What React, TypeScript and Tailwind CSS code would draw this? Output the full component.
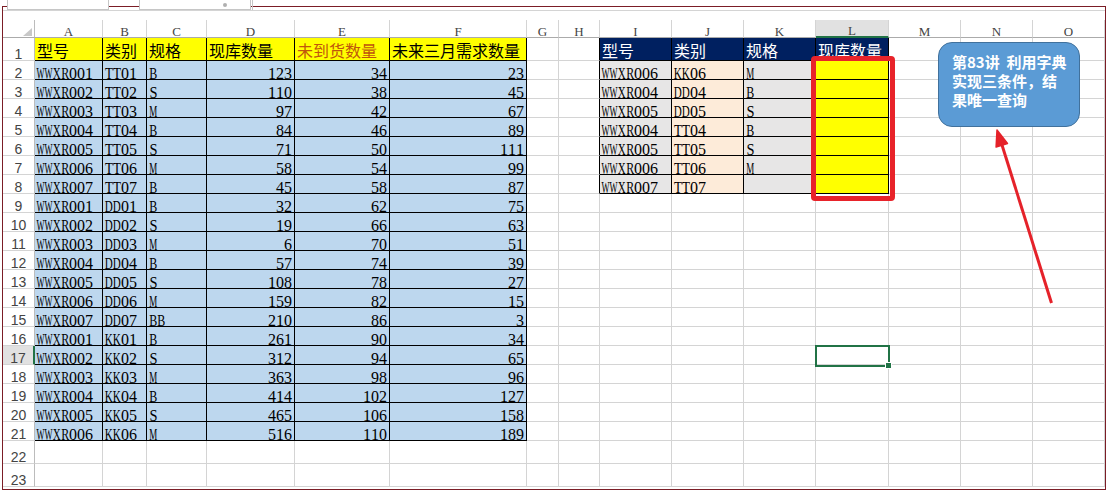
import React from "react";

const COLS = ["A", "B", "C", "D", "E", "F", "G", "H", "I", "J", "K", "L", "M", "N", "O"];

type Row = [string, string, string, number, number, number];
const DATA: Row[] = [
  ["WWXR001", "TT01", "B", 123, 34, 23],
  ["WWXR002", "TT02", "S", 110, 38, 45],
  ["WWXR003", "TT03", "M", 97, 42, 67],
  ["WWXR004", "TT04", "B", 84, 46, 89],
  ["WWXR005", "TT05", "S", 71, 50, 111],
  ["WWXR006", "TT06", "M", 58, 54, 99],
  ["WWXR007", "TT07", "B", 45, 58, 87],
  ["WWXR001", "DD01", "B", 32, 62, 75],
  ["WWXR002", "DD02", "S", 19, 66, 63],
  ["WWXR003", "DD03", "M", 6, 70, 51],
  ["WWXR004", "DD04", "B", 57, 74, 39],
  ["WWXR005", "DD05", "S", 108, 78, 27],
  ["WWXR006", "DD06", "M", 159, 82, 15],
  ["WWXR007", "DD07", "BB", 210, 86, 3],
  ["WWXR001", "KK01", "B", 261, 90, 34],
  ["WWXR002", "KK02", "S", 312, 94, 65],
  ["WWXR003", "KK03", "M", 363, 98, 96],
  ["WWXR004", "KK04", "B", 414, 102, 127],
  ["WWXR005", "KK05", "S", 465, 106, 158],
  ["WWXR006", "KK06", "M", 516, 110, 189],
];

const LOOKUP: [string, string, string][] = [
  ["WWXR006", "KK06", "M"],
  ["WWXR004", "DD04", "B"],
  ["WWXR005", "DD05", "S"],
  ["WWXR004", "TT04", "B"],
  ["WWXR005", "TT05", "S"],
  ["WWXR006", "TT06", "M"],
  ["WWXR007", "TT07", ""],
];

const H1 = ["型号", "类别", "规格", "现库数量", "未到货数量", "未来三月需求数量"];
const H2 = ["型号", "类别", "规格", "现库数量"];

const SCALE: Record<string, string> = {
  W: "scale-x-[0.53]",
  M: "scale-x-[0.56]",
  X: "scale-x-[0.69]",
  K: "scale-x-[0.69]",
  D: "scale-x-[0.69]",
  R: "scale-x-[0.75]",
  B: "scale-x-[0.75]",
  T: "scale-x-[0.82]",
  S: "scale-x-[0.9]",
};

function Half({ s }: { s: string }) {
  return (
    <span className="flex [font-family:'Liberation_Serif',serif] text-[16px] leading-[10px] text-black">
      {s.split("").map((c, i) => (
        <span key={i} className="flex w-[8px] shrink-0 justify-center">
          <span className={`inline-block ${SCALE[c] ?? ""}`}>{c}</span>
        </span>
      ))}
    </span>
  );
}

function Cjk({ text, color }: { text: string; color: string }) {
  return (
    <span
      className={`whitespace-nowrap [font-family:'Noto_Sans_CJK_SC',sans-serif] text-[16px] leading-[20px] ${color}`}
    >
      {text}
    </span>
  );
}

function renderCell(r: number, c: number) {
  let bg = "bg-white";
  let br = "border-r-[#d4d4d4]";
  let bb = "border-b-[#d4d4d4]";
  let content: React.ReactNode = null;
  let align = "justify-start pl-[2px]";
  const inT1 = c <= 5 && r <= 21;
  const inT2 = c >= 8 && c <= 11 && r <= 8;
  if (inT1 || inT2) {
    br = "border-r-black";
    bb = "border-b-black";
  }
  if (c === 7 && r <= 8) br = "border-r-black";
  if (inT1) {
    if (r === 1) {
      bg = "bg-[#ffff00]";
      content = <Cjk text={H1[c]} color={c === 4 ? "text-[#c0560c]" : "text-black"} />;
    } else {
      bg = "bg-[#bdd7ee]";
      const row = DATA[r - 2];
      content = <Half s={String(row[c])} />;
      if (c > 2) align = "justify-end pr-[2px]";
    }
  }
  if (inT2) {
    const cc = c - 8;
    if (r === 1) {
      bg = "bg-[#002060]";
      content = <Cjk text={H2[cc]} color="text-white" />;
    } else {
      bg = ["bg-[#e7e6e6]", "bg-[#fdebd9]", "bg-[#e7e6e6]", "bg-[#ffff00]"][cc];
      if (cc < 3) content = <Half s={LOOKUP[r - 2][cc]} />;
    }
  }
  return (
    <div key={`c${r}-${c}`} className={`flex items-end border-r border-b ${br} ${bb} ${bg} ${align}`}>
      {content}
    </div>
  );
}

export default function App() {
  const cells: React.ReactNode[] = [];
  cells.push(
    <div key="corner" className="relative border-r border-b border-r-[#bcbcbc] border-b-[#ababab] bg-white">
      <svg className="absolute left-[20px] top-[8px]" width="9" height="8" viewBox="0 0 9 8">
        <polygon points="9,0 9,8 0,8" fill="#c8c8c8" />
      </svg>
    </div>
  );
  COLS.forEach((L, i) => {
    const sel = i === 11;
    cells.push(
      <div
        key={"h" + L}
        className={`flex items-end justify-center border-r border-r-[#d4d4d4] text-[#444] ${
          sel ? "border-b-2 border-b-[#217346] bg-[#e1e1e1]" : "border-b border-b-[#ababab] bg-white"
        }`}
      >
        <span className="[font-family:'Liberation_Serif',serif] text-[13px] leading-[10px]">{L}</span>
      </div>
    );
  });
  for (let r = 1; r <= 23; r++) {
    const rowSel = r === 17;
    cells.push(
      <div
        key={"r" + r}
        className={`flex items-end justify-center border-b border-b-[#d4d4d4] text-[#444] ${
          rowSel ? "border-r-2 border-r-[#217346] bg-[#e1e1e1]" : "border-r border-r-[#bcbcbc] bg-white"
        }`}
      >
        <span className="[font-family:'Liberation_Sans',sans-serif] text-[14px] leading-[12px]">{r}</span>
      </div>
    );
    for (let c = 0; c < 15; c++) cells.push(renderCell(r, c));
  }

  return (
    <div className="relative h-[495px] w-[1109px] overflow-hidden bg-white">
      <div className="ml-[2px] mt-[6px] h-[484px] w-[1104px] border border-[#7b1d26]">
        <div className="h-[4px] border-b border-[#d4d4d4]" />
        <div className="h-[9px]" />
        <div className="grid grid-cols-[32px_68px_44px_60px_88px_95px_137px_32px_41px_72px_72px_72px_73px_72px_72px_72px] grid-rows-[18px_23px_repeat(20,19px)_23px_23px]">
          {cells}
        </div>
      </div>

      {/* top toolbar remnants */}
      <div className="absolute left-[7px] top-0 h-[10px] w-[102px] border-x border-b border-[#c6c6c6] bg-white" />
      <div className="absolute left-[139px] top-0 h-[10px] w-[112px] border-x border-b border-[#c6c6c6] bg-white">
        <div className="absolute left-[83px] top-[3px] h-[4px] w-[4px] rounded-full bg-[#b0b0b0]" />
      </div>
      <div className="absolute left-[252px] top-0 h-[10px] w-[1px] bg-[#c6c6c6]" />

      {/* red highlight around L2:L8 */}
      <div className="absolute left-[811px] top-[56px] h-[145px] w-[84px] rounded-[4px] border-[5px] border-[#e8232a]" />

      {/* selected cell L17 */}
      <div className="absolute left-[815px] top-[345px] h-[22px] w-[75px] border-2 border-[#217346]" />
      <div className="absolute left-[886px] top-[363px] h-[5px] w-[5px] bg-[#217346] outline outline-1 outline-white" />

      {/* callout */}
      <div className="absolute left-[938px] top-[42px] h-[85px] w-[142px] rounded-[14px] border border-[#41719c] bg-[#5b9bd5] pl-[13px] pt-[9px] [font-family:'Noto_Sans_CJK_SC',sans-serif] text-[15px] font-bold leading-[19px] text-white">
        <div className="whitespace-nowrap">第83讲&nbsp;&nbsp;利用字典</div>
        <div className="whitespace-nowrap">实现三条件，结</div>
        <div className="whitespace-nowrap">果唯一查询</div>
      </div>

      {/* arrow */}
      <svg className="pointer-events-none absolute left-0 top-0" width="1109" height="495" viewBox="0 0 1109 495">
        <line x1="1051.5" y1="303" x2="1002" y2="145" stroke="#e5222a" strokeWidth="3" />
        <polygon points="997,130 1007.5,143.5 996.1,147.1" fill="#e5222a" stroke="#e5222a" strokeWidth="1.5" strokeLinejoin="round" />
      </svg>
    </div>
  );
}
